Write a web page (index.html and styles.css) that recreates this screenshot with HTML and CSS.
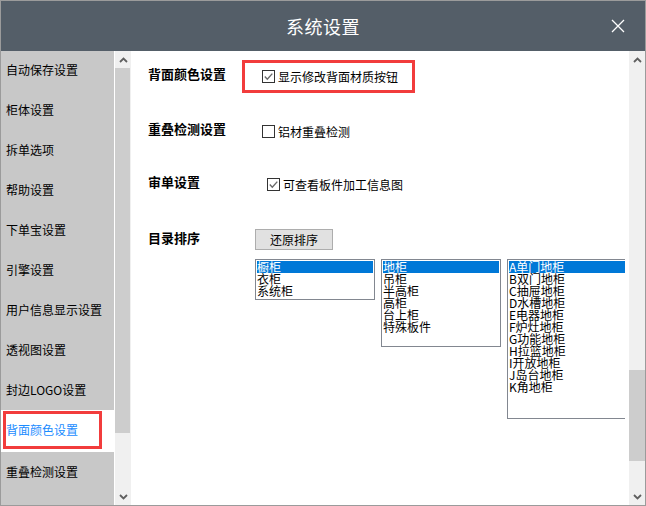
FILE: index.html
```html
<!DOCTYPE html>
<html>
<head>
<meta charset="utf-8">
<link rel="stylesheet" href="styles.css">
</head>
<body>
<div class="window">
	<div class="titlebar">
		<span class="title">系统设置</span>
		<span class="close">
			<svg width="14" height="14" viewBox="0 0 14 14"><path d="M1 1 L13 13 M13 1 L1 13" stroke="#fff" stroke-width="1.3" fill="none"/></svg>
		</span>
	</div>

	<div class="body">
		<div class="sidebar">
			<ul class="nav">
				<li>自动保存设置</li>
				<li>柜体设置</li>
				<li>拆单选项</li>
				<li>帮助设置</li>
				<li>下单宝设置</li>
				<li>引擎设置</li>
				<li>用户信息显示设置</li>
				<li>透视图设置</li>
				<li>封边LOGO设置</li>
				<li class="active"><span>背面颜色设置</span></li>
				<li>重叠检测设置</li>
				<li>材料设置</li>
			</ul>
			<div class="vscroll">
				<div class="arrow"><svg width="9" height="6" viewBox="0 0 9 6"><polyline points="1,5 4.5,1.5 8,5" stroke="#5f5f5f" stroke-width="1.8" fill="none"/></svg></div>
				<div class="track"><div class="thumb side-thumb"></div></div>
				<div class="arrow"><svg width="9" height="6" viewBox="0 0 9 6"><polyline points="1,1 4.5,4.5 8,1" stroke="#5f5f5f" stroke-width="1.8" fill="none"/></svg></div>
			</div>
		</div>

		<div class="main">
			<div class="pane">
				<div class="row first">
					<div class="label">背面颜色设置</div>
					<div class="mark">
						<span class="check on"><svg width="11" height="11" viewBox="0 0 11 11"><path d="M1.8 5.6 L4.3 8.2 L9.3 2.6" stroke="#6a6a6a" stroke-width="1.4" fill="none"/></svg></span>
						<span>显示修改背面材质按钮</span>
					</div>
				</div>

				<div class="row second">
					<div class="label">重叠检测设置</div>
					<div class="opt">
						<span class="check"></span>
						<span>铝材重叠检测</span>
					</div>
				</div>

				<div class="row third">
					<div class="label">审单设置</div>
					<div class="opt">
						<span class="check on"><svg width="11" height="11" viewBox="0 0 11 11"><path d="M1.8 5.6 L4.3 8.2 L9.3 2.6" stroke="#6a6a6a" stroke-width="1.4" fill="none"/></svg></span>
						<span>可查看板件加工信息图</span>
					</div>
				</div>

				<div class="row fourth">
					<div class="label">目录排序</div>
					<button class="button" type="button">还原排序</button>
				</div>

				<div class="lists">
					<ul class="listbox box1">
						<li class="sel">橱柜</li>
						<li>衣柜</li>
						<li>系统柜</li>
					</ul>
					<ul class="listbox box2">
						<li class="sel">地柜</li>
						<li>吊柜</li>
						<li>半高柜</li>
						<li>高柜</li>
						<li>台上柜</li>
						<li>特殊板件</li>
					</ul>
					<ul class="listbox box3">
						<li class="sel">A单门地柜</li>
						<li>B双门地柜</li>
						<li>C抽屉地柜</li>
						<li>D水槽地柜</li>
						<li>E电器地柜</li>
						<li>F炉灶地柜</li>
						<li>G功能地柜</li>
						<li>H拉篮地柜</li>
						<li>I开放地柜</li>
						<li>J岛台地柜</li>
						<li>K角地柜</li>
					</ul>
				</div>
			</div>

			<div class="vscroll main-scroll">
				<div class="arrow"><svg width="9" height="6" viewBox="0 0 9 6"><polyline points="1,5 4.5,1.5 8,5" stroke="#5f5f5f" stroke-width="1.8" fill="none"/></svg></div>
				<div class="track"><div class="thumb main-thumb"></div></div>
				<div class="arrow"><svg width="9" height="6" viewBox="0 0 9 6"><polyline points="1,1 4.5,4.5 8,1" stroke="#5f5f5f" stroke-width="1.8" fill="none"/></svg></div>
			</div>
		</div>
	</div>
</div>
</body>
</html>
```
FILE: styles.css
```css
	body {
		margin: 0;
		background-color: #fff;
		font-family: "Noto Sans CJK SC", "Liberation Sans", sans-serif;
		color: #000;
	}

	ul {
		margin: 0;
		padding: 0;
		list-style: none;
	}

	.window {
		width: 646px;
		height: 506px;
		box-sizing: border-box;
		border: 1px solid #9b9b9b;
		display: flex;
		flex-direction: column;
		overflow: hidden;
	}

	.titlebar {
		height: 50px;
		flex: none;
		background-color: #545e68;
		display: flex;
		align-items: center;
		justify-content: center;
		position: relative;
	}

	.title {
		color: #fff;
		font-size: 18px;
		line-height: 24px;
		letter-spacing: 0.5px;
	}

	.close {
		position: absolute;
		right: 20px;
		top: 18px;
		width: 14px;
		height: 14px;
	}

	.close svg {
		display: block;
	}

	.body {
		flex: 1;
		display: flex;
		min-height: 0;
	}

	/* left menu */
	.sidebar {
		width: 130px;
		flex: none;
		display: flex;
	}

	.nav {
		width: 113px;
		background-color: #c8c8c8;
		border-right: 1px solid #fff;
		overflow: hidden;
		margin-top: -1px;
	}

	.nav li {
		height: 40px;
		line-height: 40px;
		padding-left: 5px;
		font-size: 12px;
		white-space: nowrap;
	}

	.nav li.active {
		background-color: #fff;
		color: #1a8cff;
		padding: 1px 12px 1px 2px;
	}

	.nav li.active span {
		display: block;
		border: 3px solid #f23c3c;
		line-height: 32px;
	}

	/* scrollbars */
	.vscroll {
		width: 16px;
		flex: none;
		background-color: #f0f0f0;
		display: flex;
		flex-direction: column;
	}

	.arrow {
		height: 17px;
		display: flex;
		align-items: center;
		justify-content: center;
		flex: none;
	}

	.track {
		flex: 1;
	}

	.thumb {
		background-color: #cdcdcd;
	}

	.side-thumb {
		height: 365px;
		margin-right: 1px;
	}

	.main-thumb {
		margin-top: 302px;
		height: 91px;
	}

	/* right panel */
	.main {
		flex: 1;
		display: flex;
		background-color: #fff;
	}

	.pane {
		width: 494px;
		margin-right: 4px;
		padding: 9px 0 0 17px;
		box-sizing: border-box;
		overflow: hidden;
	}

	.row {
		display: flex;
		align-items: flex-start;
	}

	.label {
		width: 94px;
		flex: none;
		font-size: 13px;
		font-weight: bold;
		line-height: 18px;
		white-space: nowrap;
	}

	.first .label {
		margin-top: 5px;
	}

	.mark {
		height: 27px;
		border: 3px solid #f23c3c;
		padding: 0 14px 0 17px;
		display: flex;
		align-items: center;
		font-size: 12px;
	}

	.opt {
		height: 18px;
		margin-top: 2px;
		display: flex;
		align-items: center;
		font-size: 12px;
	}

	.second {
		margin-top: 27px;
	}

	.second .opt {
		margin-left: 20px;
	}

	.third {
		margin-top: 33px;
	}

	.third .opt {
		margin-left: 25px;
	}

	.fourth {
		margin-top: 36px;
	}

	.check {
		width: 11px;
		height: 11px;
		border: 1px solid #333;
		background-color: #fff;
		margin-right: 3px;
		flex: none;
	}

	.check svg {
		display: block;
	}

	.button {
		margin: 0 0 0 13px;
		width: 78px;
		height: 21px;
		padding: 0;
		background-color: #e1e1e1;
		border: 1px solid #adadad;
		font-family: "Noto Sans CJK SC", sans-serif;
		font-size: 12px;
		color: #000;
	}

	.lists {
		display: flex;
		align-items: flex-start;
		gap: 6px;
		margin: 9px 0 0 107px;
	}

	.listbox {
		width: 120px;
		flex: none;
		box-sizing: border-box;
		border: 1px solid #828790;
		padding: 1px;
		font-size: 12px;
		line-height: 12px;
	}

	.listbox li {
		height: 12px;
		white-space: nowrap;
	}

	.listbox li.sel {
		background-color: #0078d7;
		color: #fff;
	}

	.box1 {
		height: 41px;
	}

	.box2 {
		height: 88px;
	}

	.box3 {
		height: 160px;
	}
```
